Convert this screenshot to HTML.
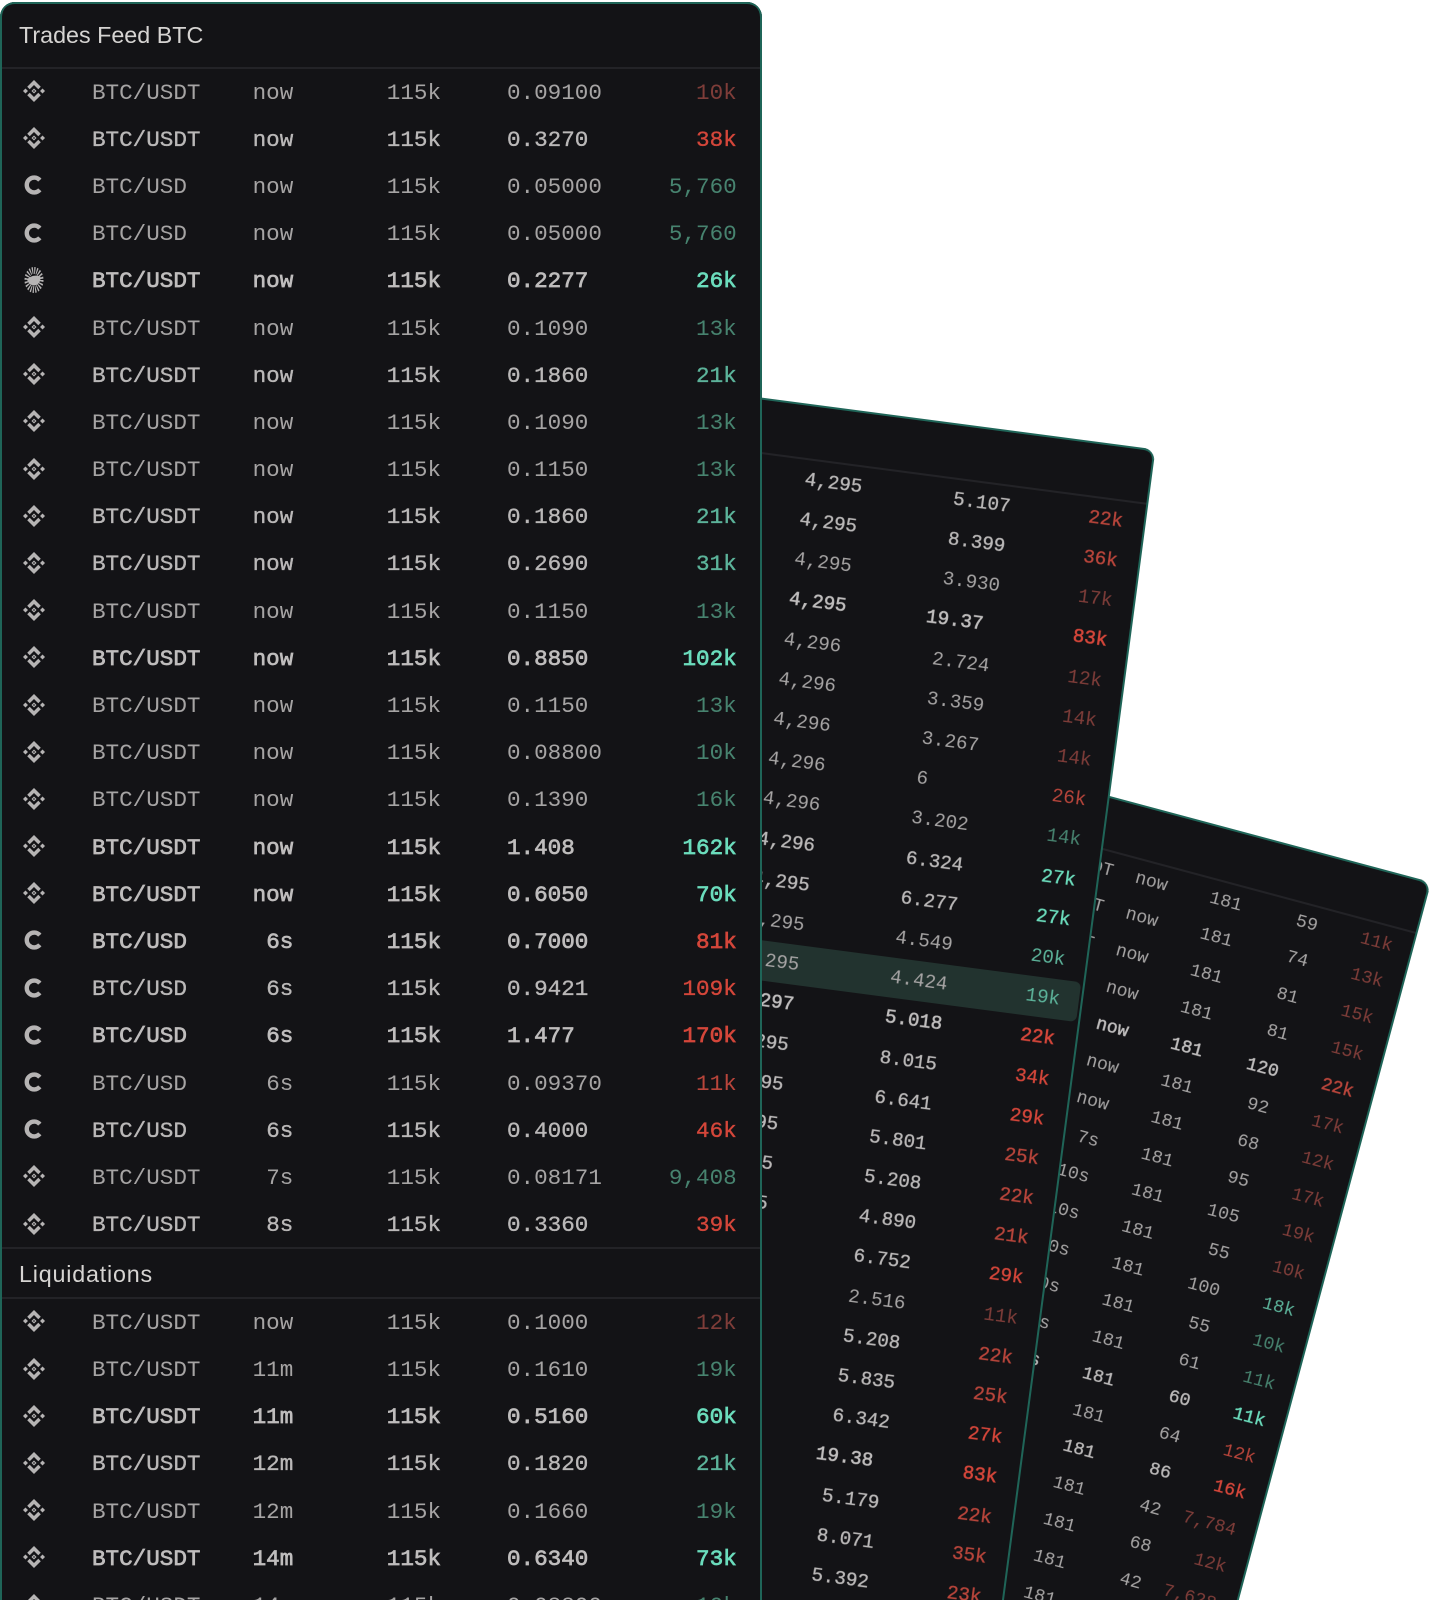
<!DOCTYPE html>
<html><head><meta charset="utf-8"><title>Trades Feed BTC</title>
<style>
html,body{margin:0;padding:0;width:1440px;height:1600px;overflow:hidden;background:#fff}
#w{position:absolute;left:0;top:0;width:1440px;height:1600px;overflow:hidden;background:#fff}
.pn{position:absolute;background:#131316;box-shadow:inset 2px 0 0 #1f6558,inset -2px 0 0 #1f6558,inset 0 2px 0 #1f6558;font-family:"Liberation Mono",monospace;transform-origin:0 0;overflow:hidden;filter:blur(.35px)}
#p1{left:0;top:2px;width:762px;height:1598px;border-radius:15px 15px 0 0;z-index:3;font-size:22.6px}
#p2{left:514.4px;top:365.1px;width:647px;height:1500px;border-radius:12px 12px 0 0;transform:rotate(7.5deg);z-index:2;font-size:19.2px}
#p3{left:840.8px;top:723.9px;width:611px;height:1200px;border-radius:12px 12px 0 0;transform:rotate(15deg);z-index:1;font-size:18.2px}
.ln{position:absolute;left:2px;right:2px;height:2px;background:#232327}
.h{position:absolute;left:19px;font-family:"Liberation Sans",sans-serif;font-size:23.3px;color:#d6d4d2;line-height:30px}
.rs{position:absolute;left:0;right:0}
#p1 .r{height:47.2px;line-height:47.2px}
#p2 .r{height:40.2px;line-height:40.2px}
#p3 .r{height:37.87px;line-height:37.87px}
.r{position:relative;white-space:pre}
.r span{position:absolute;top:1.5px}
#p2 .r span{top:0}
.l{color:#a6a4a4}
.m{color:#bab8b8;-webkit-text-stroke-width:.35px}
.b{color:#bfbdbd;-webkit-text-stroke-width:.7px}
#p2 .b{-webkit-text-stroke-width:.55px}
#p3 .b{-webkit-text-stroke-width:.45px}
.r svg{position:absolute;left:23px;top:12px;width:22px;height:22px;fill:#b6b4b4;color:#b6b4b4;-webkit-text-stroke-width:0}
.r svg.o{height:30px;top:8.6px}
#p1 .p{left:92px}#p1 .t{right:468.7px}#p1 .x{right:321px}#p1 .s{left:507px}#p1 .v{right:25.3px}
#p2 .x{right:286px}#p2 .s{left:453px}#p2 .d{left:441.5px}#p2 .v{right:23px}
#p3 .p{right:310px}#p3 .t{right:254px}#p3 .x{right:177px}#p3 .s{right:98.5px}#p3 .v{right:21px}
.r .r1{color:#7f3d39;-webkit-text-stroke-width:0}
.r .r2{color:#b8453b}
.r .r3{color:#d4463a}
.r .g1{color:#47836f;-webkit-text-stroke-width:0}
.r .g2{color:#5cb39a}
.r .g3{color:#6bdcbc}
.hl{background:#22332f;border-radius:6px;margin-right:4px}
.hl .x{margin-right:-4px}.hl .v{margin-right:-4px}
</style></head><body>
<svg width="0" height="0" style="position:absolute">
<symbol id="bn" viewBox="0 0 126.6 126.6"><path d="M38.7 53.2l24.6-24.6 24.6 24.6 14.3-14.3L63.3 0 24.4 38.9zM0 63.3L14.3 49l14.3 14.3-14.3 14.3zM38.7 73.4L63.3 98l24.6-24.6 14.3 14.3-38.9 38.9-38.9-38.9zM98 63.3L112.3 49l14.3 14.3-14.3 14.3zM77.8 63.3L63.3 48.8 48.8 63.3l14.5 14.5zM69 63.3l-5.7 5.7-5.7-5.7 5.7-5.7z" fill-rule="evenodd"/></symbol>
<symbol id="cb" viewBox="0 0 22 22"><path d="M16.8 6.2A7.4 7.4 0 1 0 16.8 15.8" fill="none" stroke="currentColor" stroke-width="4.4"/></symbol>
<symbol id="by" viewBox="0 0 22 22" preserveAspectRatio="none"><circle cx="11" cy="11" r="7" fill="none" stroke="currentColor" stroke-width="5" stroke-dasharray="1.1 1.1"/><path d="M4 10.5C8 8 12 7 17.5 8.5 18 12 15 15 11 15 8 15 5 13 4 10.5z"/></symbol>
</svg>
<div id="w">
<div class="pn" id="p1">
<div class="h" style="top:18px">Trades Feed BTC</div>
<div class="ln" style="top:64.5px"></div>
<div class="rs" style="top:66.1px">
<div class="r l"><svg><use href="#bn"/></svg><span class="p">BTC/USDT</span><span class="t">now</span><span class="x">115k</span><span class="s">0.09100</span><span class="v r1">10k</span></div>
<div class="r m"><svg><use href="#bn"/></svg><span class="p">BTC/USDT</span><span class="t">now</span><span class="x">115k</span><span class="s">0.3270</span><span class="v r3">38k</span></div>
<div class="r l"><svg><use href="#cb"/></svg><span class="p">BTC/USD</span><span class="t">now</span><span class="x">115k</span><span class="s">0.05000</span><span class="v g1">5,760</span></div>
<div class="r l"><svg><use href="#cb"/></svg><span class="p">BTC/USD</span><span class="t">now</span><span class="x">115k</span><span class="s">0.05000</span><span class="v g1">5,760</span></div>
<div class="r b"><svg class="o"><use href="#by"/></svg><span class="p">BTC/USDT</span><span class="t">now</span><span class="x">115k</span><span class="s">0.2277</span><span class="v g3">26k</span></div>
<div class="r l"><svg><use href="#bn"/></svg><span class="p">BTC/USDT</span><span class="t">now</span><span class="x">115k</span><span class="s">0.1090</span><span class="v g1">13k</span></div>
<div class="r m"><svg><use href="#bn"/></svg><span class="p">BTC/USDT</span><span class="t">now</span><span class="x">115k</span><span class="s">0.1860</span><span class="v g2">21k</span></div>
<div class="r l"><svg><use href="#bn"/></svg><span class="p">BTC/USDT</span><span class="t">now</span><span class="x">115k</span><span class="s">0.1090</span><span class="v g1">13k</span></div>
<div class="r l"><svg><use href="#bn"/></svg><span class="p">BTC/USDT</span><span class="t">now</span><span class="x">115k</span><span class="s">0.1150</span><span class="v g1">13k</span></div>
<div class="r m"><svg><use href="#bn"/></svg><span class="p">BTC/USDT</span><span class="t">now</span><span class="x">115k</span><span class="s">0.1860</span><span class="v g2">21k</span></div>
<div class="r m"><svg><use href="#bn"/></svg><span class="p">BTC/USDT</span><span class="t">now</span><span class="x">115k</span><span class="s">0.2690</span><span class="v g2">31k</span></div>
<div class="r l"><svg><use href="#bn"/></svg><span class="p">BTC/USDT</span><span class="t">now</span><span class="x">115k</span><span class="s">0.1150</span><span class="v g1">13k</span></div>
<div class="r b"><svg><use href="#bn"/></svg><span class="p">BTC/USDT</span><span class="t">now</span><span class="x">115k</span><span class="s">0.8850</span><span class="v g3">102k</span></div>
<div class="r l"><svg><use href="#bn"/></svg><span class="p">BTC/USDT</span><span class="t">now</span><span class="x">115k</span><span class="s">0.1150</span><span class="v g1">13k</span></div>
<div class="r l"><svg><use href="#bn"/></svg><span class="p">BTC/USDT</span><span class="t">now</span><span class="x">115k</span><span class="s">0.08800</span><span class="v g1">10k</span></div>
<div class="r l"><svg><use href="#bn"/></svg><span class="p">BTC/USDT</span><span class="t">now</span><span class="x">115k</span><span class="s">0.1390</span><span class="v g1">16k</span></div>
<div class="r b"><svg><use href="#bn"/></svg><span class="p">BTC/USDT</span><span class="t">now</span><span class="x">115k</span><span class="s">1.408</span><span class="v g3">162k</span></div>
<div class="r b"><svg><use href="#bn"/></svg><span class="p">BTC/USDT</span><span class="t">now</span><span class="x">115k</span><span class="s">0.6050</span><span class="v g3">70k</span></div>
<div class="r b"><svg><use href="#cb"/></svg><span class="p">BTC/USD</span><span class="t">6s</span><span class="x">115k</span><span class="s">0.7000</span><span class="v r3">81k</span></div>
<div class="r m"><svg><use href="#cb"/></svg><span class="p">BTC/USD</span><span class="t">6s</span><span class="x">115k</span><span class="s">0.9421</span><span class="v r3">109k</span></div>
<div class="r b"><svg><use href="#cb"/></svg><span class="p">BTC/USD</span><span class="t">6s</span><span class="x">115k</span><span class="s">1.477</span><span class="v r3">170k</span></div>
<div class="r l"><svg><use href="#cb"/></svg><span class="p">BTC/USD</span><span class="t">6s</span><span class="x">115k</span><span class="s">0.09370</span><span class="v r2">11k</span></div>
<div class="r m"><svg><use href="#cb"/></svg><span class="p">BTC/USD</span><span class="t">6s</span><span class="x">115k</span><span class="s">0.4000</span><span class="v r3">46k</span></div>
<div class="r l"><svg><use href="#bn"/></svg><span class="p">BTC/USDT</span><span class="t">7s</span><span class="x">115k</span><span class="s">0.08171</span><span class="v g1">9,408</span></div>
<div class="r m"><svg><use href="#bn"/></svg><span class="p">BTC/USDT</span><span class="t">8s</span><span class="x">115k</span><span class="s">0.3360</span><span class="v r3">39k</span></div>
</div>
<div class="ln" style="top:1245px"></div>
<div class="h" style="top:1257px;letter-spacing:.8px">Liquidations</div>
<div class="ln" style="top:1294.7px"></div>
<div class="rs" style="top:1296.4px">
<div class="r l"><svg><use href="#bn"/></svg><span class="p">BTC/USDT</span><span class="t">now</span><span class="x">115k</span><span class="s">0.1000</span><span class="v r1">12k</span></div>
<div class="r l"><svg><use href="#bn"/></svg><span class="p">BTC/USDT</span><span class="t">11m</span><span class="x">115k</span><span class="s">0.1610</span><span class="v g1">19k</span></div>
<div class="r b"><svg><use href="#bn"/></svg><span class="p">BTC/USDT</span><span class="t">11m</span><span class="x">115k</span><span class="s">0.5160</span><span class="v g3">60k</span></div>
<div class="r m"><svg><use href="#bn"/></svg><span class="p">BTC/USDT</span><span class="t">12m</span><span class="x">115k</span><span class="s">0.1820</span><span class="v g2">21k</span></div>
<div class="r l"><svg><use href="#bn"/></svg><span class="p">BTC/USDT</span><span class="t">12m</span><span class="x">115k</span><span class="s">0.1660</span><span class="v g1">19k</span></div>
<div class="r b"><svg><use href="#bn"/></svg><span class="p">BTC/USDT</span><span class="t">14m</span><span class="x">115k</span><span class="s">0.6340</span><span class="v g3">73k</span></div>
<div class="r l"><svg><use href="#bn"/></svg><span class="p">BTC/USDT</span><span class="t">14m</span><span class="x">115k</span><span class="s">0.08800</span><span class="v g1">10k</span></div>
</div>
</div>

<div class="pn" id="p2">
<div class="ln" style="top:54px"></div>
<div class="rs" style="top:55.9px">
<div class="r m"><span class="x">4,295</span><span class="s">5.107</span><span class="v r2">22k</span></div>
<div class="r m"><span class="x">4,295</span><span class="s">8.399</span><span class="v r2">36k</span></div>
<div class="r l"><span class="x">4,295</span><span class="s">3.930</span><span class="v r1">17k</span></div>
<div class="r b"><span class="x">4,295</span><span class="d">19.37</span><span class="v r3">83k</span></div>
<div class="r l"><span class="x">4,296</span><span class="s">2.724</span><span class="v r1">12k</span></div>
<div class="r l"><span class="x">4,296</span><span class="s">3.359</span><span class="v r1">14k</span></div>
<div class="r l"><span class="x">4,296</span><span class="s">3.267</span><span class="v r1">14k</span></div>
<div class="r l"><span class="x">4,296</span><span class="s">6</span><span class="v r2">26k</span></div>
<div class="r l"><span class="x">4,296</span><span class="s">3.202</span><span class="v g1">14k</span></div>
<div class="r m"><span class="x">4,296</span><span class="s">6.324</span><span class="v g3">27k</span></div>
<div class="r m"><span class="x">4,295</span><span class="s">6.277</span><span class="v g3">27k</span></div>
<div class="r l"><span class="x">4,295</span><span class="s">4.549</span><span class="v g2">20k</span></div>
<div class="r l hl"><span class="x">4,295</span><span class="s">4.424</span><span class="v g2">19k</span></div>
<div class="r b"><span class="x">4,297</span><span class="s">5.018</span><span class="v r3">22k</span></div>
<div class="r m"><span class="x">4,295</span><span class="s">8.015</span><span class="v r3">34k</span></div>
<div class="r m"><span class="x">4,295</span><span class="s">6.641</span><span class="v r3">29k</span></div>
<div class="r m"><span class="x">4,295</span><span class="s">5.801</span><span class="v r2">25k</span></div>
<div class="r m"><span class="x">4,295</span><span class="s">5.208</span><span class="v r2">22k</span></div>
<div class="r m"><span class="x">4,295</span><span class="s">4.890</span><span class="v r2">21k</span></div>
<div class="r m"><span class="s">6.752</span><span class="v r3">29k</span></div>
<div class="r l"><span class="s">2.516</span><span class="v r1">11k</span></div>
<div class="r m"><span class="s">5.208</span><span class="v r2">22k</span></div>
<div class="r m"><span class="s">5.835</span><span class="v r2">25k</span></div>
<div class="r m"><span class="s">6.342</span><span class="v r3">27k</span></div>
<div class="r b"><span class="d">19.38</span><span class="v r3">83k</span></div>
<div class="r m"><span class="s">5.179</span><span class="v r2">22k</span></div>
<div class="r m"><span class="s">8.071</span><span class="v r2">35k</span></div>
<div class="r m"><span class="s">5.392</span><span class="v r2">23k</span></div>
</div>
</div>

<div class="pn" id="p3">
<div class="ln" style="top:51.5px"></div>
<div class="rs" style="top:53px">
<div class="r l"><span class="p">BTC/USDT</span><span class="t">now</span><span class="x">181</span><span class="s">59</span><span class="v r1">11k</span></div>
<div class="r l"><span class="p">BTC/USDT</span><span class="t">now</span><span class="x">181</span><span class="s">74</span><span class="v r1">13k</span></div>
<div class="r l"><span class="p">BTC/USDT</span><span class="t">now</span><span class="x">181</span><span class="s">81</span><span class="v r1">15k</span></div>
<div class="r l"><span class="p">BTC/USDT</span><span class="t">now</span><span class="x">181</span><span class="s">81</span><span class="v r1">15k</span></div>
<div class="r b"><span class="p">BTC/USDT</span><span class="t">now</span><span class="x">181</span><span class="s">120</span><span class="v r2">22k</span></div>
<div class="r l"><span class="p">BTC/USDT</span><span class="t">now</span><span class="x">181</span><span class="s">92</span><span class="v r1">17k</span></div>
<div class="r l"><span class="p">BTC/USDT</span><span class="t">now</span><span class="x">181</span><span class="s">68</span><span class="v r1">12k</span></div>
<div class="r l"><span class="t">7s</span><span class="x">181</span><span class="s">95</span><span class="v r1">17k</span></div>
<div class="r l"><span class="t">10s</span><span class="x">181</span><span class="s">105</span><span class="v r1">19k</span></div>
<div class="r l"><span class="t">10s</span><span class="x">181</span><span class="s">55</span><span class="v r1">10k</span></div>
<div class="r l"><span class="t">10s</span><span class="x">181</span><span class="s">100</span><span class="v g2">18k</span></div>
<div class="r l"><span class="t">10s</span><span class="x">181</span><span class="s">55</span><span class="v g1">10k</span></div>
<div class="r l"><span class="t">10s</span><span class="x">181</span><span class="s">61</span><span class="v g1">11k</span></div>
<div class="r m"><span class="t">10s</span><span class="x">181</span><span class="s">60</span><span class="v g3">11k</span></div>
<div class="r l"><span class="x">181</span><span class="s">64</span><span class="v r2">12k</span></div>
<div class="r m"><span class="x">181</span><span class="s">86</span><span class="v r3">16k</span></div>
<div class="r l"><span class="x">181</span><span class="s">42</span><span class="v r1">7,784</span></div>
<div class="r l"><span class="x">181</span><span class="s">68</span><span class="v r1">12k</span></div>
<div class="r l"><span class="x">181</span><span class="s">42</span><span class="v r1">7,628</span></div>
<div class="r l"><span class="x">181</span></div>
</div>
</div>
</div>
</body></html>
